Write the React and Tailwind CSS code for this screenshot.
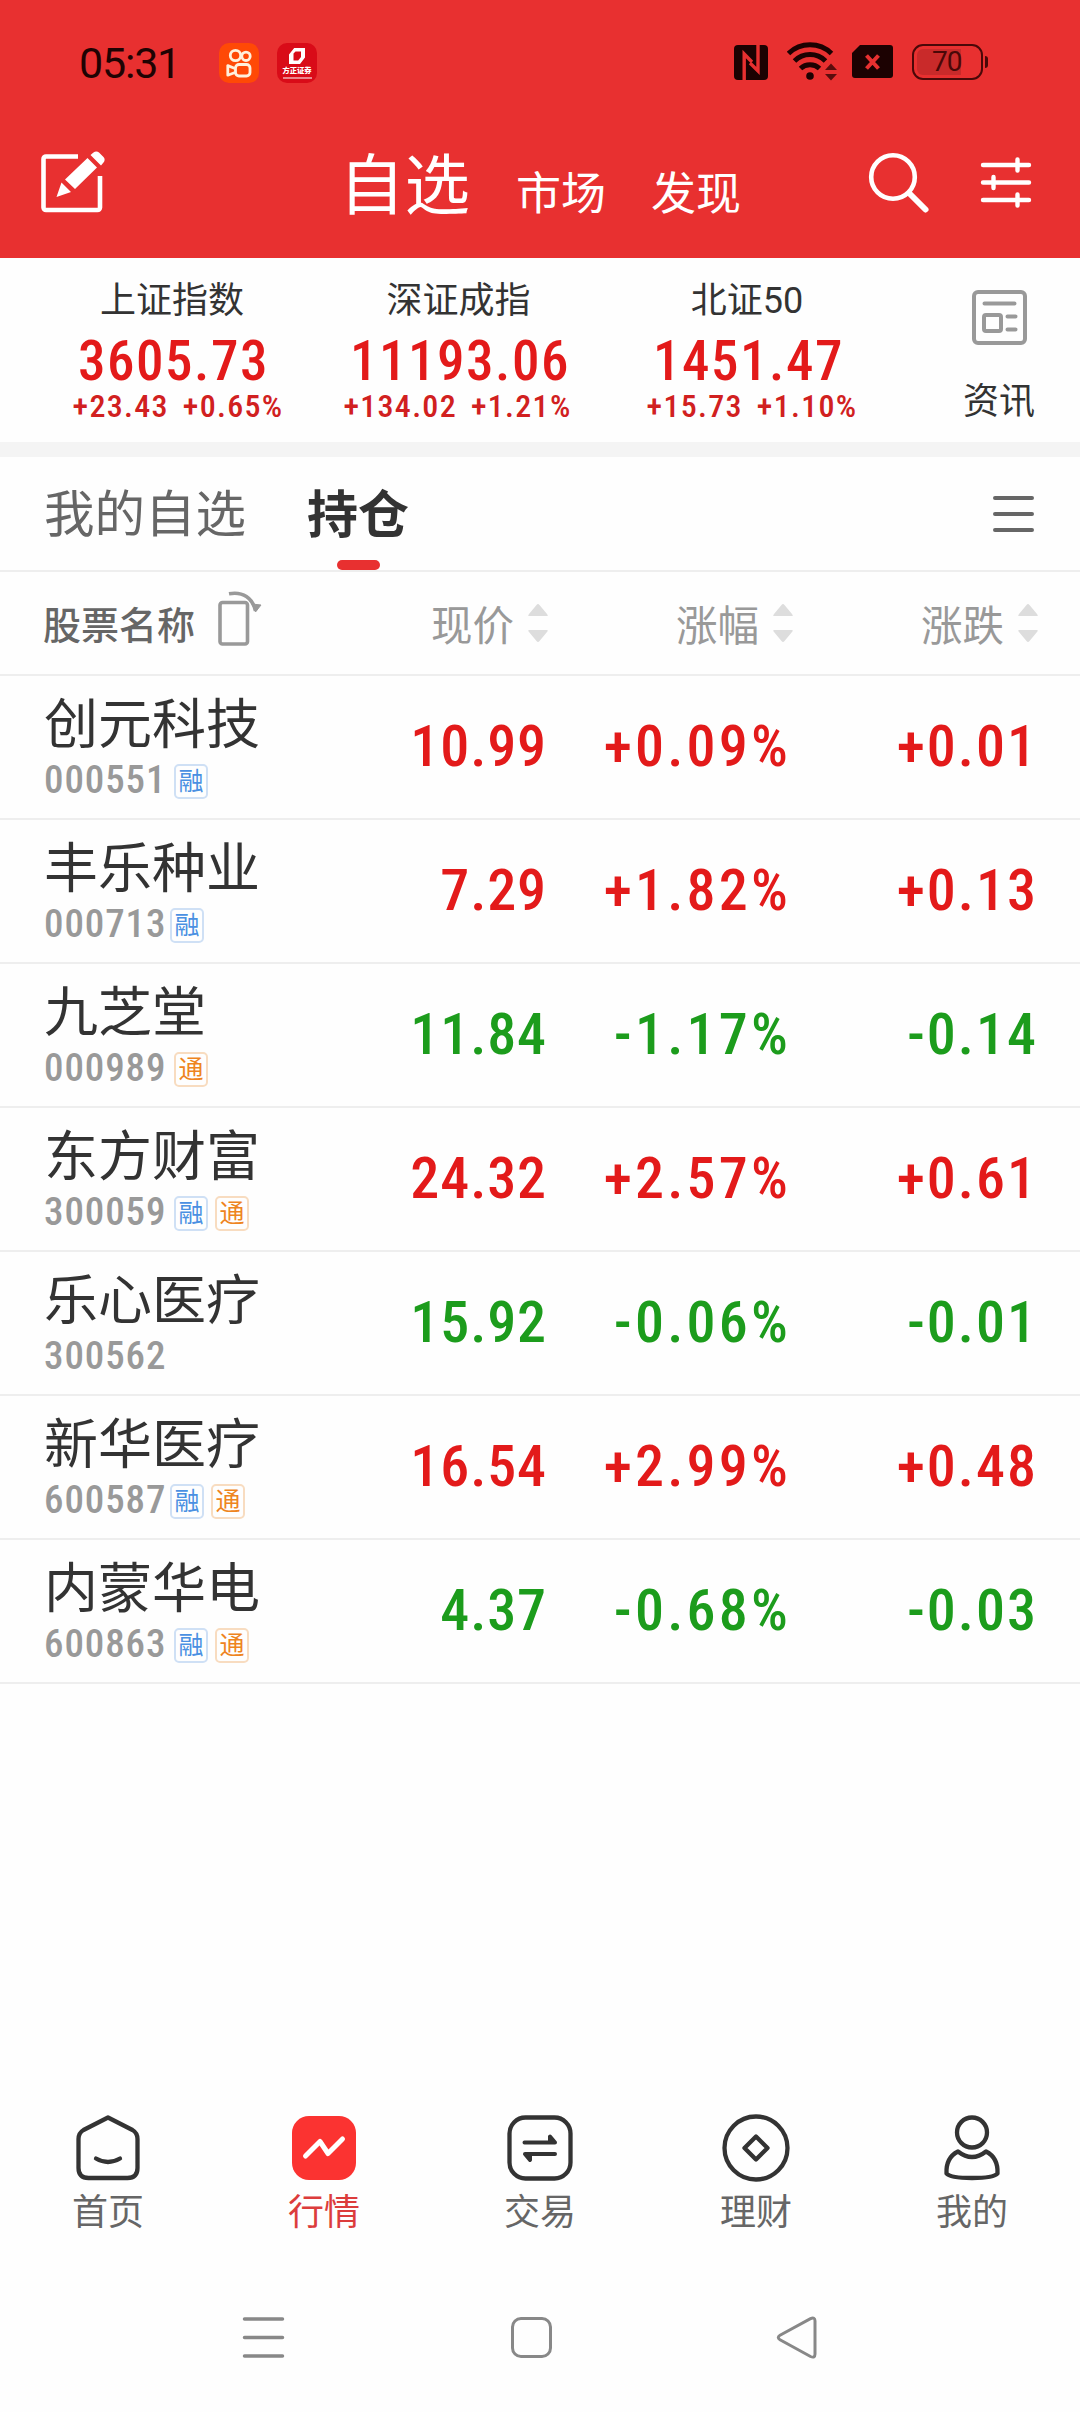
import clsx from 'clsx';

const indices = [
  { name: '上证指数', value: '3605.73', change: '+23.43', percent: '+0.65%', width: 'w-[288px]', pad: 'pl-[12px]' },
  { name: '深证成指', value: '11193.06', change: '+134.02', percent: '+1.21%', width: 'w-[285px]', pad: 'pr-[2px]' },
  { name: '北证50', value: '1451.47', change: '+15.73', percent: '+1.10%', width: 'w-[292px]', pad: 'pl-[10px]' },
];

const stocks = [
  { name: '创元科技', code: '000551', tags: ['融'], price: '10.99', percent: '+0.09%', diff: '+0.01' },
  { name: '丰乐种业', code: '000713', tags: ['融'], price: '7.29', percent: '+1.82%', diff: '+0.13' },
  { name: '九芝堂', code: '000989', tags: ['通'], price: '11.84', percent: '-1.17%', diff: '-0.14' },
  { name: '东方财富', code: '300059', tags: ['融', '通'], price: '24.32', percent: '+2.57%', diff: '+0.61' },
  { name: '乐心医疗', code: '300562', tags: [], price: '15.92', percent: '-0.06%', diff: '-0.01' },
  { name: '新华医疗', code: '600587', tags: ['融', '通'], price: '16.54', percent: '+2.99%', diff: '+0.48' },
  { name: '内蒙华电', code: '600863', tags: ['融', '通'], price: '4.37', percent: '-0.68%', diff: '-0.03' },
];

const StatusBar = () => (
  <div className="flex h-[126px] items-start pl-[79px] text-[#1f0303]">
    <span className="mt-[42px] w-[140px] text-[43px] leading-none tracking-[-1.2px]">05:31</span>
    <svg className="mt-[43px] h-10 w-10" viewBox="0 0 40 40" fill="none" stroke="#fff0dc" strokeWidth="2.8">
      <rect width="40" height="40" rx="10" fill="#ff4906" stroke="none" />
      <circle cx="16.5" cy="12.5" r="5.2" />
      <circle cx="27" cy="13.3" r="4.2" />
      <rect x="16.5" y="21.5" width="14.5" height="11.5" rx="3.5" />
      <path d="M16 25.5 8.8 22.6v9.6L16 29.5" strokeLinejoin="round" />
    </svg>
    <div className="mt-[43px] ml-[18px] flex h-10 w-10 flex-col items-center rounded-[10px] bg-[#d90b18] pt-[5px] text-white">
      <svg className="h-4 w-4" viewBox="0 0 16 16" fill="none">
        <path d="M5.2 0H16v9.5L11 16H0V6.5zM4.5 5.5v7h4.7l2.8-3.4V3.6H6.5z" fill="white" fillRule="evenodd" />
      </svg>
      <span className="mt-[3px] text-[7.3px] leading-[8px] font-black whitespace-nowrap">方正证券</span>
      <span className="mt-[2px] h-[1.5px] w-[29px] bg-white/50" />
    </div>
    <svg className="mt-[45px] ml-[417px] h-[35px] w-[34px]" viewBox="0 0 34 35">
      <rect width="34" height="35" rx="4" fill="#1c0202" />
      <path d="M10.2 35V9L18 17M24 0v26L16 18" fill="none" stroke="#e83030" strokeWidth="3.4" />
    </svg>
    <svg className="mt-[41px] ml-[19px] h-10 w-[50px]" viewBox="0 0 50 40" fill="none" stroke="#1c0202" strokeWidth="5">
      <path d="M1.5 12.5a31 31 0 0 1 43 0" />
      <path d="M7.5 20a22 22 0 0 1 31 0" />
      <path d="M13.5 27.5a14 14 0 0 1 19 0" />
      <circle cx="23" cy="35" r="3.8" fill="#1c0202" stroke="none" />
      <path d="M38 29h12l-6-6.5zM38 33h12l-6 6.5z" fill="#5a0d0d" stroke="none" />
    </svg>
    <svg className="mt-[45px] ml-[15px] h-[34px] w-[41px]" viewBox="0 0 41 34">
      <path d="M8 0h30a3 3 0 0 1 3 3v27a3 3 0 0 1-3 3H3a3 3 0 0 1-3-3V8z" fill="#1c0202" />
      <path d="m14.5 10.5 12 13m0-13-12 13" stroke="#e83030" strokeWidth="4" />
    </svg>
    <div className="mt-[44px] ml-[19px] flex h-9 w-[71px] rounded-[11px] border-[2.5px] border-[#4a0808] p-[3px]">
      <div className="h-full w-[44px] rounded-l-[6px] bg-[#c92a2a]">
        <span className="block pl-[15px] text-[28px] leading-[26px] tracking-[-1px] text-[#4a0808]">70</span>
      </div>
    </div>
    <span className="mt-[56px] ml-[2px] h-3 w-[3px] rounded-r bg-[#4a0808]" />
  </div>
);

const Header = () => (
  <div className="flex h-[132px] items-start text-white">
    <svg className="mt-[24px] ml-[40px] h-[64px] w-[66px]" viewBox="0 0 66 64" fill="none">
      <path d="M38 6.5H6A2.5 2.5 0 0 0 3.5 9v48.5A2.5 2.5 0 0 0 6 60h51.5a2.5 2.5 0 0 0 2.5-2.5V26" stroke="white" strokeWidth="4.6" />
      <path d="m16.5 47 5-14.5 9.5 9.5zM25 29.5 47.5 8l9.5 9.5L35 39z" fill="white" />
      <path d="m50.5 5 3-2.5c1.5-1.5 4-1.5 5.5 0L63.5 7c1.5 1.5 1.5 4 0 5.5L61 15.5z" fill="white" />
    </svg>
    <span className="mt-[28px] ml-[233px] w-[177px] text-[65.5px] leading-none">自选</span>
    <span className="mt-[46px] w-[135px] text-[45px] leading-none">市场</span>
    <span className="mt-[46px] w-[90px] text-[45px] leading-none">发现</span>
    <svg className="mt-[26px] ml-[127px] h-[62px] w-[62px]" viewBox="0 0 62 62" fill="none" stroke="white">
      <circle cx="25" cy="25" r="21.8" strokeWidth="4.6" />
      <path d="m41.5 41.5 16 16" strokeWidth="6" strokeLinecap="round" />
    </svg>
    <svg className="mt-[31px] ml-[49px] h-[54px] w-[54px]" viewBox="0 0 54 54" stroke="white" strokeWidth="4.4" strokeLinecap="round">
      <path d="M4 8h46M4 25.5h46M4 43h46M38.5 2.5v11M14.5 20v11M38.5 37.5v11" />
    </svg>
  </div>
);

const IndexBar = () => (
  <div className="flex h-[199px] border-b-[15px] border-[#f4f4f4] pl-[28px]">
    {indices.map((item) => (
      <div key={item.name} className={clsx('flex flex-col items-center pt-[25px] whitespace-nowrap', item.width)}>
        <span className="text-[36px] leading-none text-[#333]">{item.name}</span>
        <span className="mt-[15px] pl-[3px] font-['Roboto_Condensed'] text-[55px] leading-none font-medium tracking-[1.5px] text-[#e31a1a]">
          {item.value}
        </span>
        <span
          className={clsx(
            "mt-px flex gap-[14px] font-['Roboto_Condensed'] text-[32px] leading-none font-medium tracking-[1.3px] text-[#d12020]",
            item.pad
          )}
        >
          <span>{item.change}</span>
          <span>{item.percent}</span>
        </span>
      </div>
    ))}
    <div className="ml-[35px] flex w-[142px] flex-col items-center pt-[32px]">
      <svg className="h-[55px] w-[55px]" viewBox="0 0 55 55" fill="none" stroke="#999" strokeWidth="4">
        <rect x="2" y="2" width="51" height="51" rx="4" />
        <rect x="12" y="25" width="17" height="16" rx="2" />
        <path d="M12.5 13.5h30M35.5 26.5h8M35.5 39.5h8" strokeLinecap="round" />
      </svg>
      <span className="mt-[39px] text-[36px] leading-none text-[#333]">资讯</span>
    </div>
  </div>
);

const ListTabs = () => (
  <div className="flex h-[115px] items-start border-b-2 border-[#eee] pl-[44px]">
    <span className="mt-[33px] text-[50.5px] leading-none text-[#666]">我的自选</span>
    <div className="ml-[61px] flex h-[113px] flex-col items-center justify-between pt-[33px]">
      <span className="text-[51px] leading-none font-bold text-[#333]">持仓</span>
      <span className="h-[10px] w-[43px] rounded-full bg-[#e83030]" />
    </div>
    <svg className="mt-[39px] ml-[583px] h-9 w-[42px]" viewBox="0 0 42 36" stroke="#666" strokeWidth="4" strokeLinecap="round">
      <path d="M3 2h37M3 18h37M3 34h37" />
    </svg>
  </div>
);

const SortArrows = () => (
  <svg className="mt-[32px] h-[38px] w-5" viewBox="0 0 20 38" fill="#ddd">
    <path d="M1 12q-1.500 0 0-2L8.500 1q1.500-2 3 0L19 10q1.500 2 0 2zM1 26q-1.500 0 0 2l7.500 9q1.500 2 3 0L19 28q1.500-2 0-2z" />
  </svg>
);

const columns = ['现价', '涨幅', '涨跌'];

const TableHeader = () => (
  <div className="flex h-[104px] items-start border-b-2 border-[#eee] pl-[43px]">
    <div className="flex w-[388px] shrink-0 items-start">
      <span className="mt-[35px] text-[38px] leading-none font-medium text-[#666]">股票名称</span>
      <svg className="mt-[19px] ml-[21px] h-[56px] w-[46px]" viewBox="0 0 46 56" fill="none" stroke="#999" strokeWidth="3.6">
        <rect x="4" y="11.5" width="27.5" height="41.5" rx="2.5" />
        <path d="M13 2.800c14-2.500 23.500 4 26.500 17" />
        <path d="m36 13 3.500 8 5.500-7z" fill="#999" strokeWidth="1" />
      </svg>
    </div>
    {columns.map((label) => (
      <div key={label} className="mr-[48px] flex w-[197px] shrink-0 items-start gap-[14px] last:mr-0 last:w-[149px]">
        <span className="mt-[34px] text-[41.5px] leading-none text-[#999]">{label}</span>
        <SortArrows />
      </div>
    ))}
  </div>
);

const Tag = ({ label }) => (
  <span
    className={clsx(
      'flex h-[35px] w-[34px] items-center justify-center rounded-[5px] border-2 text-[25px] leading-none',
      label === '融' ? 'border-[#cfe0f5] text-[#4a90e2]' : 'border-[#f8dcc0] text-[#ee8420]'
    )}
  >
    {label}
  </span>
);

const StockRow = ({ stock }) => {
  const narrow = stock.code.includes('7');

  return (
    <div className="flex h-[144px] items-start border-b-2 border-[#eee] pl-[44px]">
      <div className="w-[256px] pt-[23px]">
        <div className="text-[54px] leading-none whitespace-nowrap text-[#333]">{stock.name}</div>
        <div className="mt-[8px] flex items-start">
          <span
            className={clsx(
              "font-['Roboto_Condensed'] text-[39px] leading-none font-medium tracking-[0.9px] text-[#999]",
              narrow ? 'w-[126px]' : 'w-[130px]'
            )}
          >
            {stock.code}
          </span>
          <span className="mt-[3px] flex gap-[7px]">
            {stock.tags.map((tag) => (
              <Tag key={tag} label={tag} />
            ))}
          </span>
        </div>
      </div>
      <div
        className={clsx(
          "flex pt-[41px] text-right font-['Roboto_Condensed'] text-[58px] leading-none font-medium",
          stock.diff.startsWith('-') ? 'text-[#1c9c1c]' : 'text-[#e31a1a]'
        )}
      >
        <span className="w-[247px] tracking-[0.9px]">{stock.price}</span>
        <span className="w-[244px] tracking-[3.2px]">{stock.percent}</span>
        <span className="w-[247px] tracking-[2px]">{stock.diff}</span>
      </div>
    </div>
  );
};

const HomeIcon = () => (
  <path d="M35 4.500 59.500 17q5 3 5 9v29q0 10-10 10h-39q-10 0-10-10V26q0-6 5-9zM23 45.500q12 7 24 0" />
);

const TradeIcon = () => (
  <>
    <rect x="4.5" y="4.5" width="61" height="61" rx="16" />
    <path d="M19.500 29.500H50l-5-6v6M50 41H20l5 6v-6" fill="#333" strokeWidth="4" />
  </>
);

const WealthIcon = () => (
  <>
    <circle cx="35" cy="35" r="31.5" />
    <path d="M35 23.500 46.500 35 35 46.500 23.500 35z" />
  </>
);

const ProfileIcon = () => (
  <>
    <circle cx="35" cy="19.5" r="15" />
    <path d="M21 38.500q14 11 28 0c8 4 12 11 11.500 22q-3.500 4.500-25.500 4.500T9.500 60.500C9 49.500 13 42.500 21 38.500z" />
  </>
);

const MarketIcon = () => (
  <>
    <rect x="3" y="3" width="64" height="64" rx="17" fill="#fb3331" stroke="none" />
    <path d="m16.500 43 14.500-14.500 8 12 14.500-14.500" stroke="white" strokeWidth="5" />
  </>
);

const navItems = [
  { label: '首页', Icon: HomeIcon },
  { label: '行情', Icon: MarketIcon, active: true },
  { label: '交易', Icon: TradeIcon },
  { label: '理财', Icon: WealthIcon },
  { label: '我的', Icon: ProfileIcon },
];

const BottomNav = () => (
  <div className="grid h-[169px] grid-cols-5">
    {navItems.map(({ label, Icon, active }) => (
      <div key={label} className="flex flex-col items-center">
        <svg
          className="mr-px h-[70px] w-[70px]"
          viewBox="0 0 70 70"
          fill="none"
          stroke="#333"
          strokeWidth="4.3"
          strokeLinecap="round"
          strokeLinejoin="round"
        >
          <Icon />
        </svg>
        <span className={clsx('mt-[12px] text-[36px] leading-none', active ? 'text-[#dc3c3c]' : 'text-[#666]')}>
          {label}
        </span>
      </div>
    ))}
  </div>
);

const SystemNav = () => (
  <div className="flex flex-1 items-start pt-[34px] pl-[242px]">
    <svg className="h-[43px] w-[43px]" viewBox="0 0 43 43" stroke="#888" strokeWidth="3.5" strokeLinecap="round">
      <path d="M2.500 3h38M2.500 21.500h38M2.500 40h38" />
    </svg>
    <span className="mt-px ml-[226px] h-[41px] w-[41px] rounded-[10px] border-3 border-[#888]" />
    <svg className="ml-[224px] h-[43px] w-[43px]" viewBox="0 0 43 43" fill="none" stroke="#888" strokeWidth="3">
      <path d="M4 19.300 34.500 2.700q4.500-2 4.500 2.300v33q0 4.500-4.500 2.500L4 23.700q-3.500-2.200 0-4.400z" />
    </svg>
  </div>
);

const App = () => {
  return (
    <div className="flex h-[2412px] w-[1080px] flex-col overflow-hidden bg-[#fefefe] font-['Roboto','Noto_Sans_CJK_SC',sans-serif]">
      <header className="bg-[#e83030]">
        <StatusBar />
        <Header />
      </header>
      <IndexBar />
      <ListTabs />
      <TableHeader />
      <main className="h-[1437px]">
        {stocks.map((stock) => (
          <StockRow key={stock.code} stock={stock} />
        ))}
      </main>
      <BottomNav />
      <SystemNav />
    </div>
  );
};

export default App;
